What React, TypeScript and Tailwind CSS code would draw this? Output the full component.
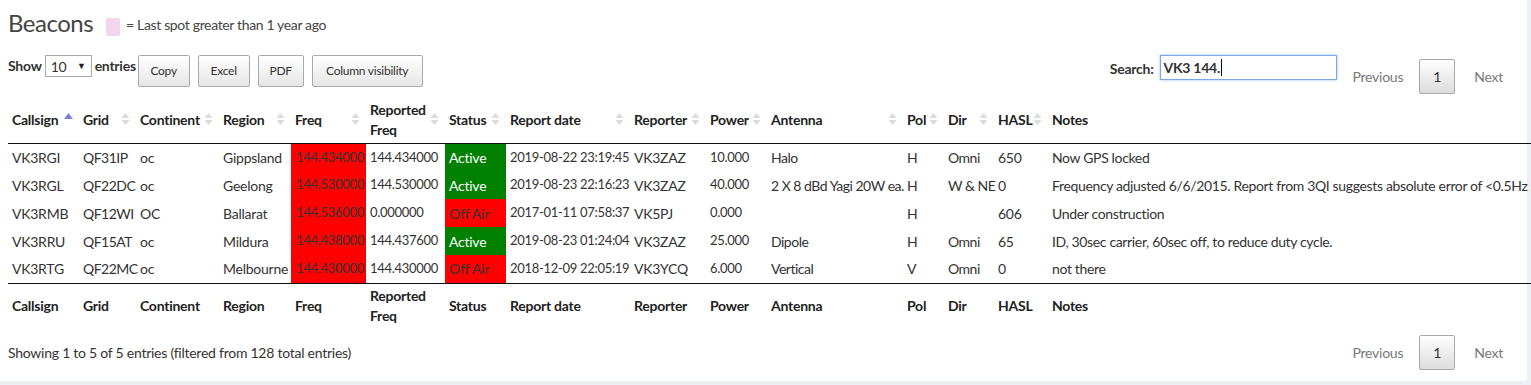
import React from "react";

const cols = [
  { key: "callsign", label: "Callsign", w: 71 },
  { key: "grid", label: "Grid", w: 57 },
  { key: "continent", label: "Continent", w: 83 },
  { key: "region", label: "Region", w: 72 },
  { key: "freq", label: "Freq", w: 75 },
  { key: "rfreq", label: "Reported Freq", w: 79 },
  { key: "status", label: "Status", w: 61 },
  { key: "date", label: "Report date", w: 124 },
  { key: "reporter", label: "Reporter", w: 76 },
  { key: "power", label: "Power", w: 61 },
  { key: "antenna", label: "Antenna", w: 136 },
  { key: "pol", label: "Pol", w: 41 },
  { key: "dir", label: "Dir", w: 50 },
  { key: "hasl", label: "HASL", w: 54 },
  { key: "notes", label: "Notes", w: 700 },
];

// number columns run wide in the fallback font
const numeric = [4, 5, 7, 9];

const rows = [
  ["VK3RGI", "QF31IP", "oc", "Gippsland", "144.434000", "144.434000", "Active", "2019-08-22 23:19:45", "VK3ZAZ", "10.000", "Halo", "H", "Omni", "650", "Now GPS locked"],
  ["VK3RGL", "QF22DC", "oc", "Geelong", "144.530000", "144.530000", "Active", "2019-08-23 22:16:23", "VK3ZAZ", "40.000", "2 X 8 dBd Yagi 20W ea.", "H", "W & NE", "0", "Frequency adjusted 6/6/2015. Report from 3QI suggests absolute error of <0.5Hz ze"],
  ["VK3RMB", "QF12WI", "OC", "Ballarat", "144.536000", "0.000000", "Off Air", "2017-01-11 07:58:37", "VK5PJ", "0.000", "", "H", "", "606", "Under construction"],
  ["VK3RRU", "QF15AT", "oc", "Mildura", "144.438000", "144.437600", "Active", "2019-08-23 01:24:04", "VK3ZAZ", "25.000", "Dipole", "H", "Omni", "65", "ID, 30sec carrier, 60sec off, to reduce duty cycle."],
  ["VK3RTG", "QF22MC", "oc", "Melbourne", "144.430000", "144.430000", "Off Air", "2018-12-09 22:05:19", "VK3YCQ", "6.000", "Vertical", "V", "Omni", "0", "not there"],
];

function SortIcon({ active }: { active?: boolean }) {
  if (active) {
    return (
      <svg className="absolute right-[6px] top-[16px]" width="9" height="6" viewBox="0 0 9 6">
        <path d="M4.5 0 L9 6 L0 6 Z" fill="#7e80d8" />
      </svg>
    );
  }
  return (
    <svg className="absolute right-[6px] top-[16px]" width="9" height="12" viewBox="0 0 9 12">
      <path d="M4.5 0 L8.5 5 L0.5 5 Z" fill="#dcdcdc" />
      <path d="M0.5 7 L8.5 7 L4.5 12 Z" fill="#dcdcdc" />
    </svg>
  );
}

function Pager() {
  return (
    <div className="flex items-center h-[35px] text-[14px]">
      <span className="px-[16px] text-[#777]">Previous</span>
      <span className="w-[36px] h-[35px] flex items-center justify-center border border-[#a8a8a8] rounded-[2px] bg-gradient-to-b from-white to-[#dcdcdc] text-[#333]">
        1
      </span>
      <span className="pl-[19px] pr-[16px] text-[#777]">Next</span>
    </div>
  );
}

function Btn({ label, w }: { label: string; w: string }) {
  return (
    <div
      className={`${w} h-[32px] flex items-center justify-center text-[12px] text-[#333] border border-[#a9a9a9] rounded-[2px] bg-gradient-to-b from-white to-[#e6e6e6]`}
    >
      {label}
    </div>
  );
}

export default function App() {
  return (
    <div
      className="w-[1531px] h-[385px] overflow-hidden bg-[#ecf0f5] text-[#333] tracking-[-0.25px]"
      style={{ fontFamily: "Lato, 'Open Sans', sans-serif" }}
    >
      <div className="w-[1527px] h-[381px] bg-white rounded-br-[3px] px-[8px] pt-[8px]">
        {/* Title */}
        <div className="flex items-start h-[30px]">
          <h1 className="text-[24px] leading-[30px] text-[#444] tracking-[-0.5px]">Beacons</h1>
          <span className="ml-[13px] mt-[10px] w-[14px] h-[18px] rounded-[2px] bg-[#f3d6ec]"></span>
          <span className="ml-[6px] mt-[7px] text-[14px] leading-[20px] text-[#444] tracking-[-0.35px]">= Last spot greater than 1 year ago</span>
        </div>

        {/* Toolbar */}
        <div className="flex justify-between mt-[17px] h-[42px]">
          <div className="flex items-start">
            <span className="font-bold text-[14px] leading-[22px]">Show</span>
            <div className="ml-[3px] w-[47px] h-[22px] border border-[#aaa] flex items-center justify-between px-[5px] text-[14px]">
              <span>10</span>
              <span className="text-[9px] text-[#222]">▼</span>
            </div>
            <span className="ml-[3px] font-bold text-[14px] leading-[22px] w-[43px]">entries</span>
            <div className="flex gap-[8px]">
              <Btn label="Copy" w="w-[52px]" />
              <Btn label="Excel" w="w-[52px]" />
              <Btn label="PDF" w="w-[46px]" />
              <Btn label="Column visibility" w="w-[111px]" />
            </div>
          </div>
          <div className="flex items-start">
            <span className="font-bold text-[14px] leading-[25px] mt-[1px]">Search:</span>
            <div className="ml-[6px] w-[177px] h-[25px] border border-[#7aa7e8] shadow-[0_0_3px_rgba(102,155,233,0.6)] flex items-center px-[3px] text-[14px] font-bold">
              VK3 144.
              <span className="ml-[1px] w-[1px] h-[17px] bg-black"></span>
            </div>
            <div className="mt-[4px]">
              <Pager />
            </div>
          </div>
        </div>

        {/* Table */}
        <table className="table-fixed border-collapse w-[1660px] text-[14px]">
          <colgroup>
            {cols.map((c) => (
              <col key={c.key} style={{ width: c.w }} />
            ))}
          </colgroup>
          <thead>
            <tr className="border-b border-[#111]">
              {cols.map((c, i) => (
                <th
                  key={c.key}
                  className="relative h-[46px] px-[4px] text-left align-middle font-bold leading-[20px] text-[#222]"
                >
                  <span className={c.key === "rfreq" ? "block w-[60px]" : "whitespace-nowrap"}>{c.label}</span>
                  {c.key !== "notes" && <SortIcon active={i === 0} />}
                </th>
              ))}
            </tr>
          </thead>
          <tbody>
            {rows.map((r) => (
              <tr key={r[0]} className="h-[28px]">
                {r.map((v, i) => {
                  let cls = "px-[4px] whitespace-nowrap";
                  if (numeric.includes(i)) cls += " text-[13px] tracking-[-0.3px]";
                  if (i === 1 || i === 10 || i === 12) cls += " tracking-[-0.5px]";
                  if (i === 14) cls += " tracking-[-0.35px]";
                  if (i === 4) cls += " bg-[#ff0000] pl-[5px]";
                  if (i === 6) cls += v === "Active" ? " bg-[#008000] text-white" : " bg-[#ff0000]";
                  return (
                    <td key={i} className={cls}>
                      {v}
                    </td>
                  );
                })}
              </tr>
            ))}
          </tbody>
          <tfoot>
            <tr className="border-t border-[#111]">
              {cols.map((c) => (
                <th key={c.key} className="h-[46px] px-[4px] text-left align-middle font-bold leading-[20px] text-[#222]">
                  <span className={c.key === "rfreq" ? "block w-[60px]" : "whitespace-nowrap"}>{c.label}</span>
                </th>
              ))}
            </tr>
          </tfoot>
        </table>

        {/* Info + paging */}
        <div className="flex justify-between items-center mt-[6px]">
          <span className="text-[14px]">Showing 1 to 5 of 5 entries (filtered from 128 total entries)</span>
          <Pager />
        </div>
      </div>
    </div>
  );
}
